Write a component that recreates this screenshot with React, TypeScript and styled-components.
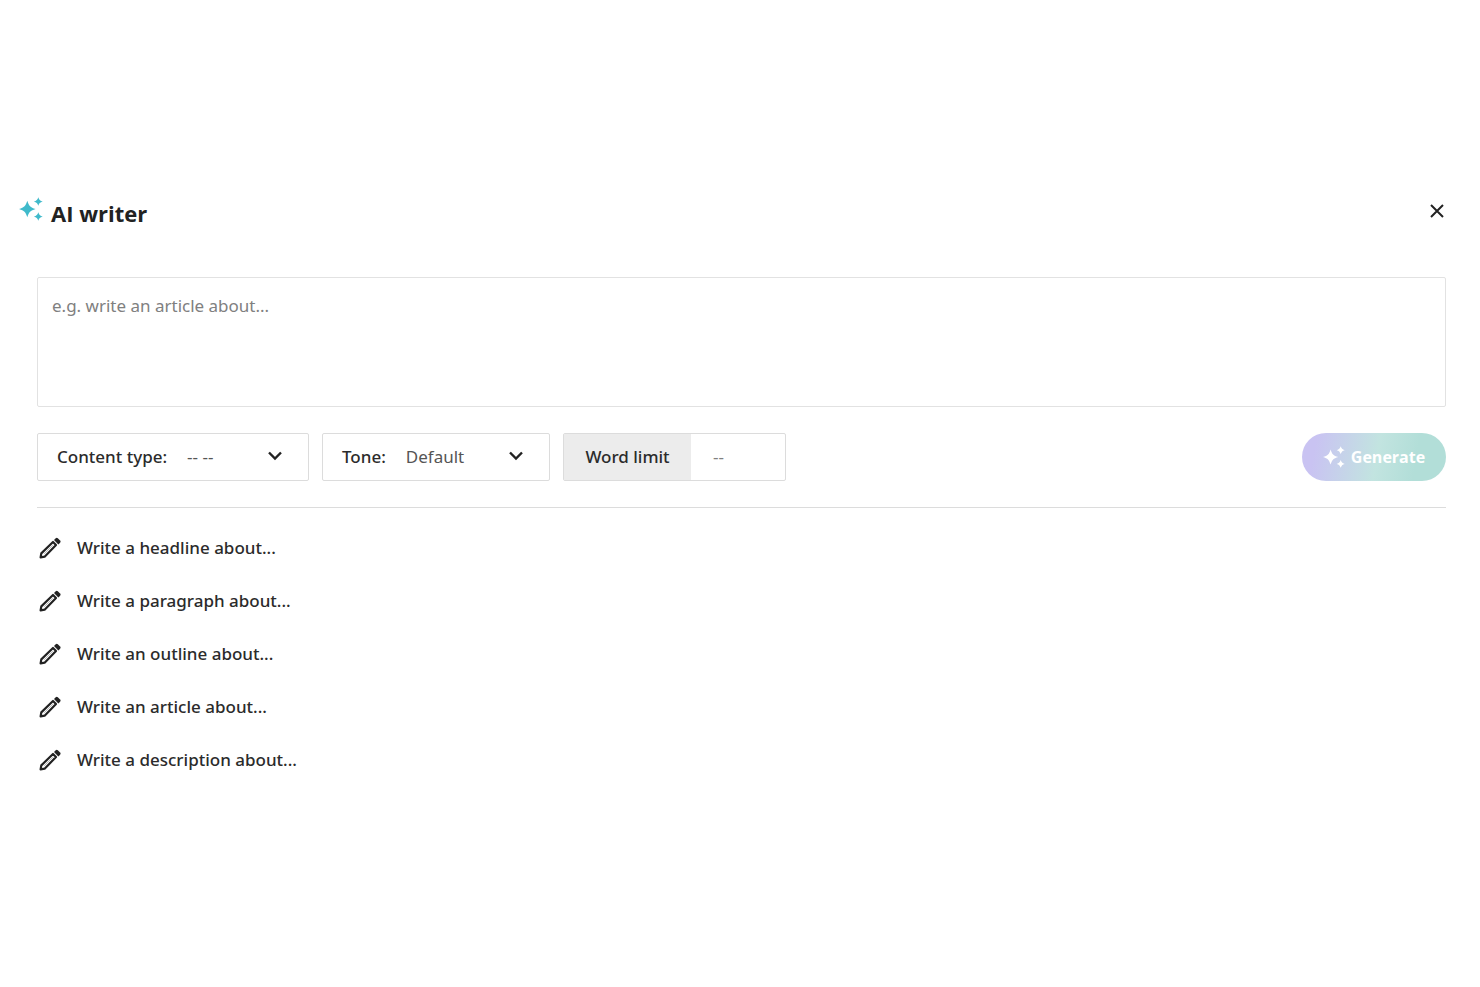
import React, { useState } from "react";
import styled, { createGlobalStyle } from "styled-components";

const GlobalStyle = createGlobalStyle`
  * { box-sizing: border-box; }
  body {
    margin: 0;
    background: #fff;
    color: #2b2b2b;
    font-family: "Noto Sans", "Open Sans", sans-serif;
    font-size: 17px;
    line-height: 24px;
  }
  button, input, select, textarea { font: inherit; color: inherit; }
`;

const Panel = styled.main`
  padding: 195px 34px 32px 19px;
`;

const Header = styled.header`
  display: flex;
  justify-content: space-between;
  align-items: center;
  height: 32px;
`;

const Brand = styled.div`
  display: flex;
  align-items: flex-start;
  gap: 8px;
  padding-top: 2px;
  color: #40bacb;
`;

const Title = styled.h1`
  margin: 0;
  padding-top: 2px;
  color: #222;
  font-family: "Open Sans", "Noto Sans", sans-serif;
  font-size: 22px;
  line-height: 28px;
  font-weight: 700;
`;

const CloseButton = styled.button`
  display: flex;
  padding: 0;
  border: 0;
  background: none;
  color: #222;
  cursor: pointer;
`;

const Form = styled.form`
  margin: 50px 0 0 18px;
`;

const Prompt = styled.textarea`
  display: block;
  width: 100%;
  height: 130px;
  padding: 16px 14px;
  border: 1px solid #e2e2e2;
  border-radius: 2px;
  background: #fff;
  resize: none;
  &::placeholder { color: #808080; opacity: 1; }
`;

const Toolbar = styled.div`
  display: flex;
  gap: 13px;
  padding: 26px 0;
  border-bottom: 1px solid #dcdcdc;
`;

const Field = styled.div<{ $width: number }>`
  display: flex;
  align-items: center;
  width: ${(p) => p.$width}px;
  height: 48px;
  border: 1px solid #dcdcdc;
  border-radius: 2px;
`;

const PickerField = styled(Field)`
  padding: 0 24px 0 19px;
  gap: 20px;
`;

const FieldLabel = styled.label`
  flex: none;
  font-weight: 500;
`;

const PickerBox = styled.div`
  display: grid;
  flex: 1;
  align-items: center;
  min-width: 0;
  > * { grid-area: 1 / 1; }
  > svg { justify-self: end; pointer-events: none; }
`;

const Picker = styled.select`
  appearance: none;
  width: 100%;
  padding: 0;
  border: 0;
  background: none;
  color: #555;
`;

const LimitLabel = styled(FieldLabel)`
  display: flex;
  align-items: center;
  justify-content: center;
  align-self: stretch;
  width: 127px;
  background: #ececec;
`;

const LimitInput = styled.input`
  flex: 1;
  min-width: 0;
  padding: 0 22px;
  border: 0;
  background: none;
  &::placeholder { color: #808080; opacity: 1; }
`;

const GenerateButton = styled.button`
  display: flex;
  align-items: center;
  justify-content: center;
  gap: 6px;
  width: 144px;
  height: 48px;
  margin-left: auto;
  padding: 0;
  border: 0;
  border-radius: 24px;
  background: linear-gradient(100deg, #c9c3f2 10%, #c2e4e0 52%, #b2ded8 78%);
  color: #fff;
  font-family: "Open Sans", "Noto Sans", sans-serif;
  font-size: 16px;
  font-weight: 700;
  cursor: pointer;
`;

const Suggestions = styled.ul`
  display: flex;
  flex-direction: column;
  align-items: flex-start;
  gap: 29px;
  margin: 28px 0 0 18px;
  padding: 0;
  list-style: none;
`;

const Suggestion = styled.button`
  display: flex;
  align-items: center;
  gap: 15px;
  padding: 0 0 0 1px;
  border: 0;
  background: none;
  font-weight: 500;
  cursor: pointer;
`;

const Sparkles = ({ size }: { size: number }) => (
  <svg width={size} height={size} viewBox="0 0 24 24" fill="currentColor" aria-hidden="true">
    <path d="M8.300 3.700C10 9 11.200 10.300 16.600 12 11.200 13.700 10 15 8.300 20.300 6.600 15 5.400 13.700 0 12 5.400 10.300 6.600 9 8.300 3.700Z" />
    <path d="M19.300.2C20.200 2.900 21 3.600 23.700 4.500 21 5.400 20.200 6.100 19.300 8.800 18.400 6.100 17.600 5.400 14.900 4.500 17.600 3.600 18.400 2.900 19.300.2Z" />
    <path d="M19.300 15.200C20.200 17.900 21 18.600 23.700 19.500 21 20.400 20.200 21.100 19.300 23.800 18.400 21.100 17.600 20.400 14.900 19.500 17.600 18.600 18.400 17.900 19.300 15.200Z" />
  </svg>
);

const Close = () => (
  <svg width="18" height="18" viewBox="0 0 18 18" fill="none" stroke="currentColor" strokeWidth="2" aria-hidden="true">
    <path d="M3 3l12 12M15 3L3 15" />
  </svg>
);

const Chevron = () => (
  <svg width="18" height="18" viewBox="0 0 18 18" fill="none" stroke="#222" strokeWidth="2.400" aria-hidden="true">
    <path d="M3 4.500l6 6 6-6" />
  </svg>
);

const Pencil = () => (
  <svg width="24" height="24" viewBox="0 0 24 24" aria-hidden="true">
    <path d="M2.600 21.400l.7-4L15 6l3 3L6.600 20.700Z" fill="#fff" stroke="#222" strokeWidth="2.200" strokeLinejoin="round" />
    <path d="M6.200 17.800L14.800 9.200" stroke="#bbb" strokeWidth="1" />
    <path d="M16 4l1.700-1.700a1.500 1.500 0 0 1 2.100 0l2.300 2.300a1.500 1.500 0 0 1 0 2.100L20.400 8.400Z" fill="#222" />
  </svg>
);

const ideas = [
  "Write a headline about...",
  "Write a paragraph about...",
  "Write an outline about...",
  "Write an article about...",
  "Write a description about...",
];

export default function App() {
  const [prompt, setPrompt] = useState("");

  return (
    <>
      <GlobalStyle />
      <Panel>
        <Header>
          <Brand>
            <Sparkles size={24} />
            <Title>AI writer</Title>
          </Brand>
          <CloseButton type="button" aria-label="Close">
            <Close />
          </CloseButton>
        </Header>

        <Form onSubmit={(e) => e.preventDefault()}>
          <Prompt
            aria-label="Prompt"
            placeholder="e.g. write an article about..."
            value={prompt}
            onChange={(e) => setPrompt(e.target.value)}
          />
          <Toolbar>
            <PickerField $width={272}>
              <FieldLabel htmlFor="content-type">Content type:</FieldLabel>
              <PickerBox>
                <Picker id="content-type">
                  <option>-- --</option>
                </Picker>
                <Chevron />
              </PickerBox>
            </PickerField>
            <PickerField $width={228}>
              <FieldLabel htmlFor="tone">Tone:</FieldLabel>
              <PickerBox>
                <Picker id="tone">
                  <option>Default</option>
                </Picker>
                <Chevron />
              </PickerBox>
            </PickerField>
            <Field $width={223}>
              <LimitLabel htmlFor="word-limit">Word limit</LimitLabel>
              <LimitInput id="word-limit" inputMode="numeric" placeholder="--" />
            </Field>
            <GenerateButton type="submit">
              <Sparkles size={22} />
              Generate
            </GenerateButton>
          </Toolbar>
        </Form>

        <Suggestions>
          {ideas.map((idea) => (
            <li key={idea}>
              <Suggestion type="button" onClick={() => setPrompt(idea)}>
                <Pencil />
                {idea}
              </Suggestion>
            </li>
          ))}
        </Suggestions>
      </Panel>
    </>
  );
}
